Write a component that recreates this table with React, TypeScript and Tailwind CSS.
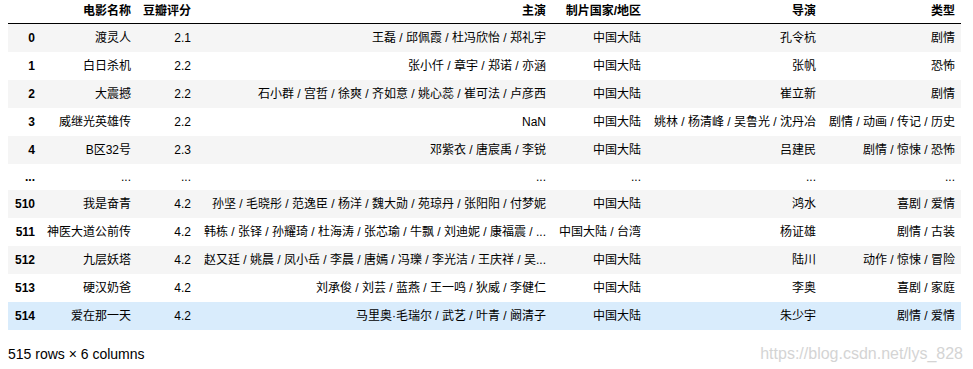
import React from "react";

type Row = [string, string, string, string, string, string, string];

const rows: Row[] = [
  ["0", "渡灵人", "2.1", "王磊 / 邱佩霞 / 杜冯欣怡 / 郑礼宇", "中国大陆", "孔令杭", "剧情"],
  ["1", "白日杀机", "2.2", "张小仟 / 章宇 / 郑诺 / 亦涵", "中国大陆", "张帆", "恐怖"],
  ["2", "大震撼", "2.2", "石小群 / 宫哲 / 徐爽 / 齐如意 / 姚心蕊 / 崔可法 / 卢彦西", "中国大陆", "崔立新", "剧情"],
  ["3", "威继光英雄传", "2.2", "NaN", "中国大陆", "姚林 / 杨清峰 / 吴鲁光 / 沈丹冶", "剧情 / 动画 / 传记 / 历史"],
  ["4", "B区32号", "2.3", "邓紫衣 / 唐宸禹 / 李锐", "中国大陆", "吕建民", "剧情 / 惊悚 / 恐怖"],
  ["...", "...", "...", "...", "...", "...", "..."],
  ["510", "我是奋青", "4.2", "孙坚 / 毛晓彤 / 范逸臣 / 杨洋 / 魏大勋 / 苑琼丹 / 张阳阳 / 付梦妮", "中国大陆", "鸿水", "喜剧 / 爱情"],
  ["511", "神医大道公前传", "4.2", "韩栋 / 张铎 / 孙耀琦 / 杜海涛 / 张芯瑜 / 牛飘 / 刘迪妮 / 康福震 / ...", "中国大陆 / 台湾", "杨证雄", "剧情 / 古装"],
  ["512", "九层妖塔", "4.2", "赵又廷 / 姚晨 / 凤小岳 / 李晨 / 唐嫣 / 冯瓅 / 李光洁 / 王庆祥 / 吴...", "中国大陆", "陆川", "动作 / 惊悚 / 冒险"],
  ["513", "硬汉奶爸", "4.2", "刘承俊 / 刘芸 / 蓝燕 / 王一鸣 / 狄威 / 李健仁", "中国大陆", "李奥", "喜剧 / 家庭"],
  ["514", "爱在那一天", "4.2", "马里奥·毛瑞尔 / 武艺 / 叶青 / 阚清子", "中国大陆", "朱少宇", "剧情 / 爱情"],
];

const headers = ["", "电影名称", "豆瓣评分", "主演", "制片国家/地区", "导演", "类型"];
const widths = [33, 96, 60, 355, 95, 175, 139];

export default function App() {
  return (
    <div
      className="relative w-[973px] h-[369px] overflow-hidden bg-white text-black"
      style={{ fontFamily: '"Liberation Sans", Arial, "Noto Sans CJK SC", sans-serif' }}
    >
      <div className="ml-[8px]">
        <table className="table-fixed border-collapse w-[953px] text-[12px]">
          <colgroup>
            {widths.map((w, i) => (
              <col key={i} style={{ width: w }} />
            ))}
          </colgroup>
          <thead>
            <tr className="border-b border-black">
              {headers.map((h, i) => (
                <th
                  key={i}
                  className="text-right font-bold px-[6px] pt-[3px] pb-[4px] leading-[16px] whitespace-nowrap"
                >
                  {h}
                </th>
              ))}
            </tr>
          </thead>
          <tbody>
            {rows.map((r, ri) => {
              const isDots = r[0] === "...";
              const bg =
                ri === rows.length - 1
                  ? "bg-[#d9ecfc]"
                  : ri % 2 === 0
                  ? "bg-[#f5f5f5]"
                  : "bg-white";
              return (
                <tr key={ri} className={bg}>
                  {r.map((c, ci) => {
                    const Tag = ci === 0 ? "th" : "td";
                    return (
                      <Tag
                        key={ci}
                        className={
                          "text-right px-[6px] py-[6px] whitespace-nowrap overflow-hidden " +
                          (isDots ? "leading-[14px] " : "leading-[16px] ") +
                          (ci === 0 ? "font-bold" : "font-normal")
                        }
                      >
                        {c}
                      </Tag>
                    );
                  })}
                </tr>
              );
            })}
          </tbody>
        </table>
        <div className="mt-[16px] text-[14px] leading-[16px]">515 rows × 6 columns</div>
      </div>
      <div className="absolute right-[10px] bottom-[6px] text-[16px] leading-[18px] text-[#d4d4d4]">
        https://blog.csdn.net/lys_828
      </div>
    </div>
  );
}
